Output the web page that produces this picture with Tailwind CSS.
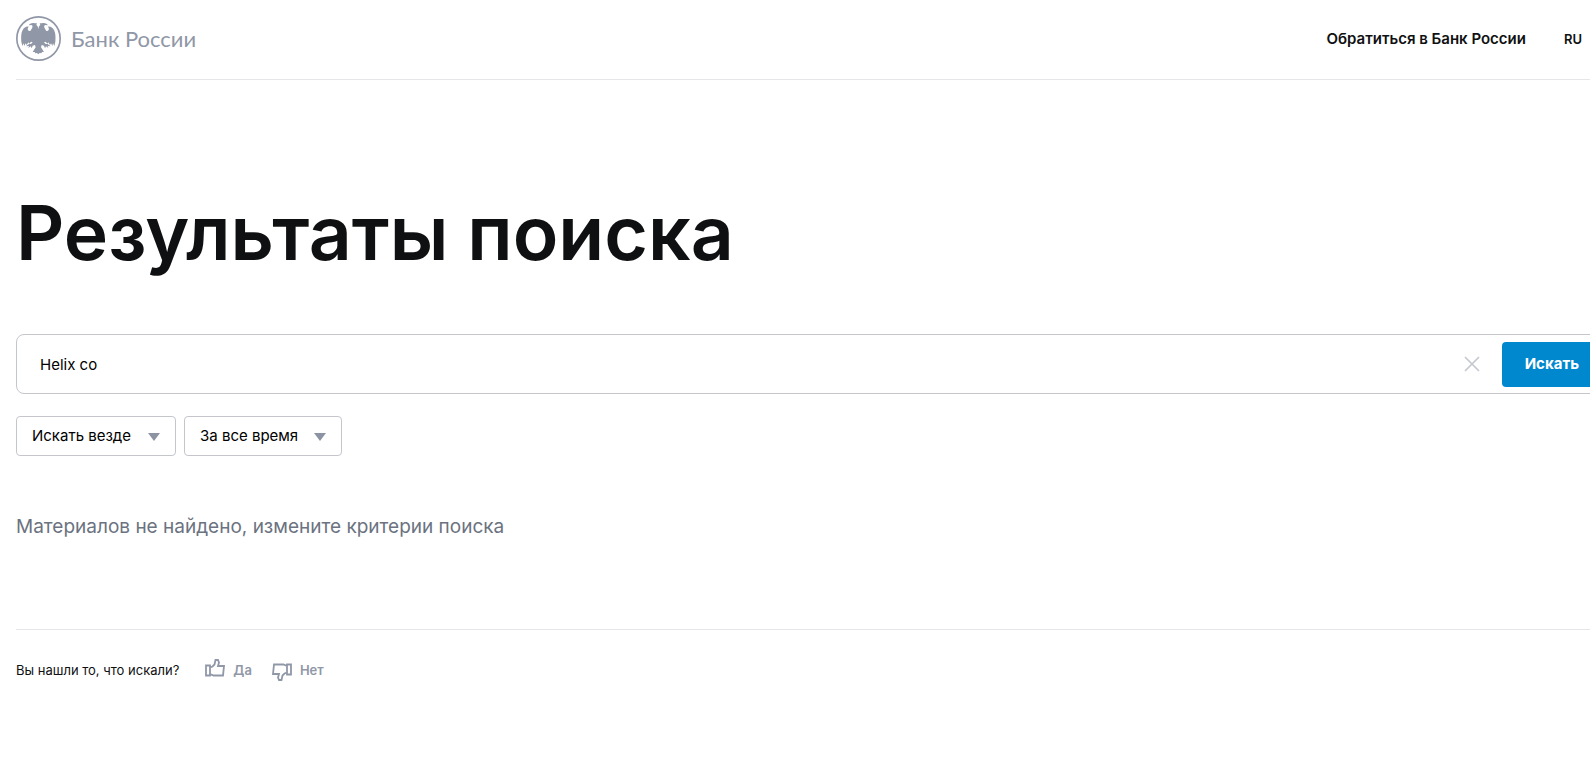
<!DOCTYPE html>
<html lang="ru">
<head>
  <meta charset="UTF-8">
  <meta name="viewport" content="width=device-width, initial-scale=1">
  <title>Результаты поиска | Банк России</title>
  <script src="https://cdn.jsdelivr.net/npm/@tailwindcss/browser@4"></script>
</head>
<body class="bg-white text-[#0f1011] font-['Inter','Liberation_Sans',sans-serif] overflow-x-hidden">

  <!-- Page column, runs past the right edge -->
  <div class="ml-4 -mr-5">

    <!-- Header -->
    <header class="flex items-center justify-between h-20 pb-[2px] pr-7 border-b border-[#e5e6e9]">
      <a href="#" class="flex items-center gap-[10px] text-[#9097a7]">
        <svg class="size-[45px]" viewBox="0 0 135 135" fill="currentColor" aria-hidden="true">
          <circle cx="67.500" cy="67.500" r="65" fill="none" stroke="currentColor" stroke-width="5" />
          <path d="M67 40 C66 33 65 29 61 27 L63 22 L57 22 C50 20 43 21 38 28 L46 27 C51 29 50 33 48 37 L43 45 C35 45 33 39 38 32 C30 31 24 35 20 42 C15 51 15 64 16 77 L19 90 L23 82 L25 90 L29 82 L32 87 L37 79 L40 83 L45 77 L50 79 L45 84 L39 84 L30 91 L39 90 L37 96 L44 91 L47 97 L50 89 L57 87 L59 94 L50 108 L56 108 L58 112 L63 111 L67 115 L71 111 L76 112 L78 108 L84 108 L75 94 L77 87 L84 89 L87 97 L90 91 L97 96 L95 90 L104 91 L95 84 L89 84 L84 79 L89 77 L94 83 L97 79 L102 87 L105 82 L109 90 L111 82 L115 90 L118 77 C119 64 119 51 114 42 C110 35 104 31 96 32 C101 39 99 45 91 45 L86 37 C84 33 83 29 88 27 L96 28 C91 21 84 20 77 22 L71 22 L73 27 C69 29 68 33 67 40 Z" />
        </svg>
        <span class="text-[22px] leading-7 font-['Lato','Open_Sans',sans-serif]">Банк России</span>
      </a>
      <nav class="flex items-center gap-[38px] pt-[2px] font-semibold">
        <a href="#" class="text-[15px]">Обратиться в Банк России</a>
        <a href="#" class="text-[13px]">RU</a>
      </nav>
    </header>

    <main>
      <h1 class="mt-[105px] text-[75px] leading-24 font-semibold">Результаты поиска</h1>

      <!-- Search form -->
      <form class="mt-[53px]">
        <div class="flex items-center h-15 pl-[23px] pr-[7px] border border-[#c4c6cc] rounded-lg">
          <label for="search" class="sr-only">Поиск</label>
          <input id="search" type="text" value="Helix co" class="grow min-w-0 h-11 text-[15px] text-black outline-none">
          <button type="button" aria-label="Очистить" class="p-[6px] mr-4 text-[#c4c6d0]">
            <svg class="size-4" viewBox="0 0 16 16" fill="none" stroke="currentColor" stroke-width="1.600">
              <path d="M1 1L15 15M15 1L1 15" />
            </svg>
          </button>
          <button type="submit" class="h-[45px] px-[23px] rounded-sm bg-[#0088cf] text-white text-[15px] font-bold">Искать</button>
        </div>

        <!-- Filters -->
        <div class="flex gap-2 mt-[22px]">
          <div class="relative">
            <label for="place" class="sr-only">Где искать</label>
            <select id="place" class="appearance-none w-40 h-10 pt-px pl-[15px] pr-9 border border-[#c4c6cc] rounded-sm text-[15px] text-black bg-white">
              <option>Искать везде</option>
            </select>
            <svg class="absolute right-4 top-[17px] w-3 h-2 pointer-events-none" viewBox="0 0 12 8" fill="#8c94a3"><path d="M0 0H12L6 8Z" /></svg>
          </div>
          <div class="relative">
            <label for="period" class="sr-only">Период</label>
            <select id="period" class="appearance-none w-[158px] h-10 pt-px pl-[15px] pr-9 border border-[#c4c6cc] rounded-sm text-[15px] text-black bg-white">
              <option>За все время</option>
            </select>
            <svg class="absolute right-4 top-[17px] w-3 h-2 pointer-events-none" viewBox="0 0 12 8" fill="#8c94a3"><path d="M0 0H12L6 8Z" /></svg>
          </div>
        </div>
      </form>

      <p class="mt-[57px] text-[19px] leading-7 text-[#6b7280]">Материалов не найдено, измените критерии поиска</p>
    </main>

    <!-- Feedback -->
    <footer class="flex items-center mt-[88px] pt-7 border-t border-[#e5e6e9] text-[13px] leading-6">
      <span>Вы нашли то, что искали?</span>
      <button type="button" class="flex items-center gap-2 ml-[26px] font-semibold text-[#9097a7]">
        <svg class="w-5 h-6" viewBox="0 0 20 24" fill="none" stroke="currentColor" stroke-width="1.800">
          <path d="M1 7.500H5V17.500H1ZM5 9.500L7.500 8.500L9.500 6.500L10.500 2H13L14 4.500L13 8H19L18 17.500H8.500L5 16" />
        </svg>
        Да
      </button>
      <button type="button" class="flex items-center gap-2 ml-5 font-semibold text-[#9097a7]">
        <svg class="w-5 h-6 rotate-180" viewBox="0 0 20 24" fill="none" stroke="currentColor" stroke-width="1.800">
          <path d="M1 7.500H5V17.500H1ZM5 9.500L7.500 8.500L9.500 6.500L10.500 2H13L14 4.500L13 8H19L18 17.500H8.500L5 16" />
        </svg>
        Нет
      </button>
    </footer>
  </div>

</body>
</html>
